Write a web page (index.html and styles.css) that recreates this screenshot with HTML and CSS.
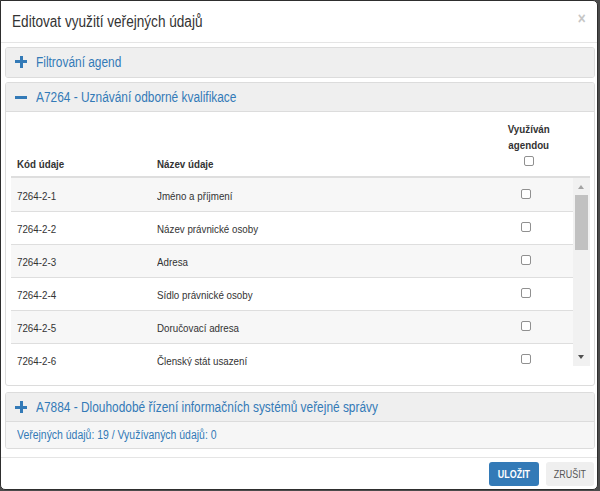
FILE: index.html
```html
<!DOCTYPE html>
<html lang="cs">
<head>
<meta charset="utf-8">
<title>Editovat využití veřejných údajů</title>
<link rel="stylesheet" href="styles.css">
</head>
<body>
<div class="modal">
  <div class="modal-header">
    <h4 class="modal-title cond">Editovat využití veřejných údajů</h4>
    <span class="close cond-c">×</span>
  </div>
  <div class="modal-body">
    <div class="panel panel-first">
      <div class="panel-heading panel-heading-closed">
        <span class="icon-plus"></span>
        <span class="panel-title cond">Filtrování agend</span>
      </div>
    </div>
    <div class="panel panel-open">
      <div class="panel-heading">
        <span class="icon-minus"></span>
        <span class="panel-title cond">A7264 - Uznávání odborné kvalifikace</span>
      </div>
      <div class="panel-body">
        <table class="grid grid-head">
          <colgroup><col class="c-code"><col class="c-name"><col class="c-chk"><col class="c-sb"></colgroup>
          <thead>
            <tr>
              <th><span class="cond">Kód údaje</span></th>
              <th><span class="cond">Název údaje</span></th>
              <th class="th-chk"><span class="cond-c">Využíván<br>agendou</span><input type="checkbox" class="chk"></th>
              <th class="th-sb"></th>
            </tr>
          </thead>
        </table>
        <div class="scroll">
          <div class="scroll-inner">
            <table class="grid grid-body">
              <colgroup><col class="c-code"><col class="c-name"><col class="c-chk"></colgroup>
              <tbody>
                <tr><td><span class="cond">7264-2-1</span></td><td><span class="cond">Jméno a příjmení</span></td><td class="td-chk"><input type="checkbox" class="chk"></td></tr>
                <tr><td><span class="cond">7264-2-2</span></td><td><span class="cond">Název právnické osoby</span></td><td class="td-chk"><input type="checkbox" class="chk"></td></tr>
                <tr><td><span class="cond">7264-2-3</span></td><td><span class="cond">Adresa</span></td><td class="td-chk"><input type="checkbox" class="chk"></td></tr>
                <tr><td><span class="cond">7264-2-4</span></td><td><span class="cond">Sídlo právnické osoby</span></td><td class="td-chk"><input type="checkbox" class="chk"></td></tr>
                <tr><td><span class="cond">7264-2-5</span></td><td><span class="cond">Doručovací adresa</span></td><td class="td-chk"><input type="checkbox" class="chk"></td></tr>
                <tr><td><span class="cond">7264-2-6</span></td><td><span class="cond">Členský stát usazení</span></td><td class="td-chk"><input type="checkbox" class="chk"></td></tr>
              </tbody>
            </table>
          </div>
          <div class="scrollbar">
            <span class="sb-up"></span>
            <span class="sb-thumb"></span>
            <span class="sb-down"></span>
          </div>
        </div>
      </div>
    </div>
    <div class="panel">
      <div class="panel-heading">
        <span class="icon-plus"></span>
        <span class="panel-title cond">A7884 - Dlouhodobé řízení informačních systémů veřejné správy</span>
      </div>
      <div class="panel-footer"><span class="cond">Veřejných údajů: 19 / Využívaných údajů: 0</span></div>
    </div>
  </div>
  <div class="modal-footer">
    <button class="btn btn-primary"><span class="cond-c">ULOŽIT</span></button>
    <button class="btn btn-default"><span class="cond-c">ZRUŠIT</span></button>
  </div>
</div>
</body>
</html>
```
FILE: styles.css
```css
html, body {
  margin: 0;
  padding: 0;
}
body {
  background: #4b4b4b;
  width: 600px;
  height: 491px;
  overflow: hidden;
  font-family: "Liberation Sans", Arial, sans-serif;
  font-size: 12px;
  color: #333;
}
/* the reference uses a narrow face; condense the Arial-metric text */
.cond,
.cond-c {
  display: inline-block;
  white-space: nowrap;
  transform: scaleX(0.85);
  transform-origin: 0 50%;
}
.cond-c {
  transform-origin: 50% 50%;
}
.modal {
  box-sizing: border-box;
  width: 598px;
  height: 490px;
  background: #fff;
  border: 1px solid #2e2e2e;
  border-radius: 0 5px 5px 5px;
  display: flex;
  flex-direction: column;
}
.modal-header {
  flex: none;
  height: 41px;
  border-bottom: 1px solid #e5e5e5;
  display: flex;
  align-items: center;
  justify-content: space-between;
  padding: 0 11px 0 11px;
}
.modal-title {
  margin: 0;
  font-size: 16px;
  font-weight: normal;
  color: #333;
  padding-top: 1px;
}
.close {
  font-size: 16px;
  font-weight: bold;
  color: #c6c6c6;
  margin-top: -6px;
}
.modal-body {
  flex: none;
  padding: 4px 2px 8px 4px;
}
.panel {
  border: 1px solid #dcdcdc;
  border-radius: 3px;
  background: #fff;
  overflow: hidden;
}
.panel-first {
  margin-bottom: 4px;
}
.panel-open {
  margin-bottom: 6px;
}
.panel-heading {
  height: 28px;
  background: #efefef;
  border-bottom: 1px solid #dcdcdc;
  display: flex;
  align-items: center;
  padding: 0 0 0 9px;
  gap: 9px;
}
.panel-heading-closed {
  border-bottom: none;
  height: 27px;
  padding-bottom: 2px;
}
.panel-title {
  font-size: 14px;
  color: #337ab7;
}
.icon-plus {
  position: relative;
  width: 12px;
  height: 12px;
  flex: none;
}
.icon-plus::before,
.icon-plus::after {
  content: "";
  position: absolute;
  background: #337ab7;
}
.icon-plus::before {
  left: 0;
  top: 4.5px;
  width: 12px;
  height: 3px;
}
.icon-plus::after {
  left: 4.5px;
  top: 0;
  width: 3px;
  height: 12px;
}
.icon-minus {
  width: 12px;
  height: 3px;
  background: #337ab7;
  flex: none;
}
.panel-body {
  padding: 5px 4px 19px 5px;
}
.grid {
  border-collapse: collapse;
  table-layout: fixed;
  width: 100%;
}
.c-code { width: 140px; }
.c-chk { width: 90px; }
.c-sb { width: 17px; }
.grid-head th {
  text-align: left;
  vertical-align: bottom;
  font-weight: bold;
  font-size: 11.5px;
  padding: 5px 6px 4.5px;
  line-height: 16px;
  border-bottom: 2px solid #dedede;
}
.grid-head .th-chk {
  text-align: center;
  line-height: 15.5px;
  padding: 5px 0 10.5px 2px;
}
.chk {
  appearance: none;
  -webkit-appearance: none;
  box-sizing: border-box;
  width: 10px;
  height: 10px;
  margin: 0;
  border: 1px solid #909090;
  border-radius: 2px;
  background: #fff;
  display: inline-block;
}
.th-chk .chk {
  display: block;
  margin: 2.5px auto 0;
}
.scroll {
  display: flex;
  height: 188px;
  overflow: hidden;
}
.scroll-inner {
  flex: 1;
  overflow: hidden;
}
.grid-body td {
  height: 16px;
  line-height: 16px;
  font-size: 11.5px;
  padding: 9px 6px 7px;
  border-top: 1px solid #dedede;
}
.grid-body tr:first-child td {
  border-top: none;
  padding-top: 10px;
}
.grid-body tr:nth-child(odd) td {
  background: #f7f7f7;
}
.grid-body .td-chk {
  text-align: center;
  padding-left: 0;
  padding-right: 4px;
}
.td-chk .chk {
  vertical-align: 1.5px;
}
.scrollbar {
  width: 17px;
  flex: none;
  background: #f1f1f1;
  position: relative;
}
.sb-up,
.sb-down {
  position: absolute;
  left: 5px;
  width: 0;
  height: 0;
  border-left: 3.5px solid transparent;
  border-right: 3.5px solid transparent;
}
.sb-up {
  top: 7px;
  border-bottom: 4px solid #a3a3a3;
}
.sb-down {
  bottom: 7px;
  border-top: 4px solid #505050;
}
.sb-thumb {
  position: absolute;
  left: 2px;
  right: 2px;
  top: 17px;
  height: 55px;
  background: #c1c1c1;
}
.panel-footer {
  background: #f6f6f6;
  height: 26px;
  line-height: 26px;
  padding: 0 11px;
  font-size: 12.3px;
  color: #337ab7;
}
.modal-footer {
  flex: 1;
  border-top: 1px solid #e5e5e5;
  display: flex;
  justify-content: flex-end;
  align-items: center;
  gap: 7px;
  padding: 0 3px 0 0;
}
.btn {
  font-family: "Liberation Sans", Arial, sans-serif;
  font-size: 10.5px;
  height: 24px;
  border: none;
  border-radius: 3px;
  padding: 0;
  cursor: pointer;
}
.btn-primary {
  background: #337ab7;
  color: #fff;
  font-weight: bold;
  width: 50px;
}
.btn-default {
  background: #efefef;
  color: #555;
  width: 48px;
}
```
